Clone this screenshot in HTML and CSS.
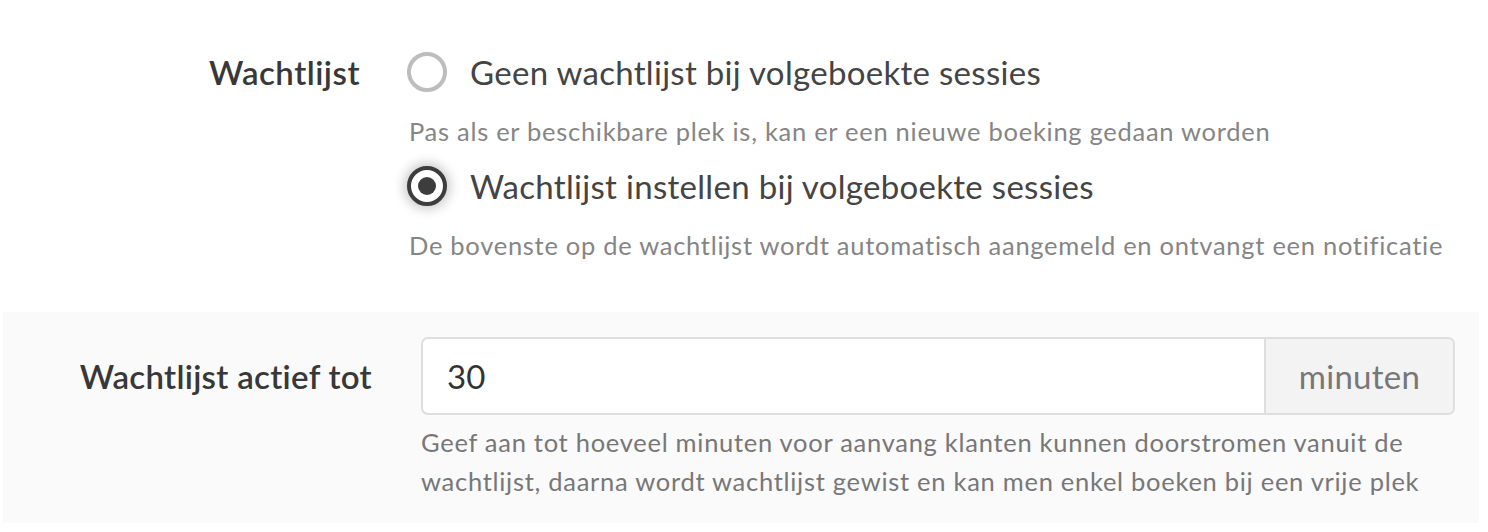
FILE: index.html
```html
<!DOCTYPE html>
<html lang="nl">
<head>
<meta charset="utf-8">
<link rel="stylesheet" href="styles.css">
</head>
<body>
<div class="form">
  <div class="row row-radio">
    <div class="label">Wachtlijst</div>
    <div class="options">
      <div class="option">
        <span class="radio"></span>
        <span class="option-text">Geen wachtlijst bij volgeboekte sessies</span>
      </div>
      <div class="desc">Pas als er beschikbare plek is, kan er een nieuwe boeking gedaan worden</div>
      <div class="option">
        <span class="radio checked"></span>
        <span class="option-text">Wachtlijst instellen bij volgeboekte sessies</span>
      </div>
      <div class="desc">De bovenste op de wachtlijst wordt automatisch aangemeld en ontvangt een notificatie</div>
    </div>
  </div>
  <div class="row row-grey">
    <div class="label label-grey">Wachtlijst actief tot</div>
    <div class="field">
      <div class="input-group">
        <div class="input">30</div>
        <div class="addon">minuten</div>
      </div>
      <div class="help">Geef aan tot hoeveel minuten voor aanvang klanten kunnen doorstromen vanuit de wachtlijst, daarna wordt wachtlijst gewist en kan men enkel boeken bij een vrije plek</div>
    </div>
  </div>
</div>
</body>
</html>
```

FILE: styles.css
```css
* { box-sizing: border-box; }
html, body { margin: 0; padding: 0; background: #fff; }
body {
  font-family: "Lato", "Noto Sans", sans-serif;
  color: #3a3a3a;
  width: 1488px;
  height: 532px;
  overflow: hidden;
}
.form { padding-top: 52px; }
.row { display: flex; align-items: flex-start; }
.label {
  width: 360px;
  text-align: right;
  font-size: 33px;
  font-weight: 600;
  letter-spacing: 0.5px;
  line-height: 40px;
  color: #383838;
  flex-shrink: 0;
  white-space: nowrap;
}
.options { margin-left: 47px; display: flex; flex-direction: column; }
.option { display: flex; align-items: center; height: 40px; }
.radio {
  width: 40px;
  height: 40px;
  border-radius: 50%;
  border: 4px solid #bdbdbd;
  background: #fff;
  flex-shrink: 0;
  position: relative;
}
.radio.checked {
  border-color: #3d3d3d;
  box-shadow: 0 0 12px 3px rgba(0,0,0,0.22);
}
.radio.checked::after {
  content: "";
  position: absolute;
  left: 50%;
  top: 50%;
  width: 18px;
  height: 18px;
  margin: -9px 0 0 -9px;
  border-radius: 50%;
  background: #3d3d3d;
}
.option-text {
  margin-left: 23px;
  font-size: 33px;
  letter-spacing: 0.3px;
  color: #444;
  white-space: nowrap;
}
.desc {
  font-size: 25.5px;
  letter-spacing: 0.72px;
  color: #858585;
  line-height: 36px;
  margin-left: 2px;
  height: 74px;
  padding-top: 21px;
  white-space: nowrap;
}
.row-grey {
  margin: 32px 9px 0 3px;
  background: #fafafa;
  padding: 25px 24px 22px 0;
}
.label-grey { width: 369px; line-height: 78px; letter-spacing: 0.3px; }
.field { margin-left: 49px; flex: 1; }
.input-group {
  display: flex;
  height: 78px;
  border: 2px solid #dedede;
  border-radius: 7px;
  overflow: hidden;
  background: #fff;
}
.input {
  flex: 1;
  padding-left: 24px;
  font-size: 33px;
  line-height: 74px;
  color: #333;
}
.addon {
  width: 189px;
  background: #f3f3f3;
  border-left: 2px solid #dedede;
  font-size: 33px;
  letter-spacing: 0.3px;
  line-height: 74px;
  text-align: center;
  color: #777;
}
.help {
  margin-top: 8px;
  font-size: 25.5px;
  letter-spacing: 0.72px;
  line-height: 39px;
  color: #777;
}
```
